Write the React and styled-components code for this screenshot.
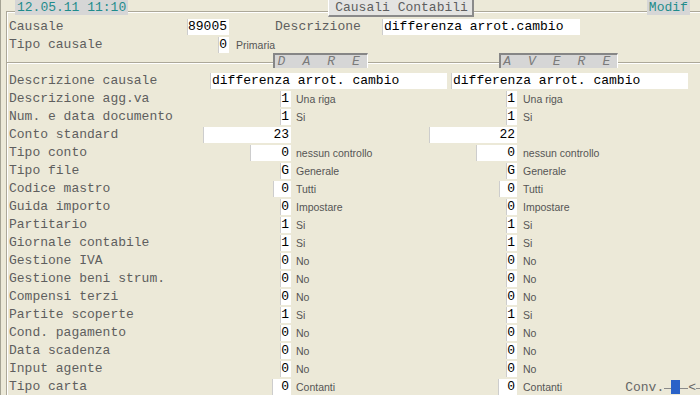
import React from 'react';
import styled, { createGlobalStyle } from 'styled-components';

const GlobalStyle = createGlobalStyle`
  html, body {
    margin: 0;
    padding: 0;
    background: #ece9d8;
  }
`;

const mono = `'Liberation Mono', 'Courier New', monospace`;
const sans = `'Liberation Sans', Arial, sans-serif`;

const Page = styled.div`
  width: 700px;
  height: 395px;
  overflow: hidden;
  box-sizing: border-box;
  background: #ece9d8;
  border-left: 1px solid #a5a394;
  padding-left: 5px;
  font-family: ${mono};
  font-size: 13px;
  color: #5e5e5e;
`;

const Frame = styled.div`
  margin-top: 11px;
  height: 384px;
  border-top: 1px solid #aca899;
  border-left: 1px solid #aca899;
  box-shadow: inset 1px 1px 0 #fff;
`;

const TopBar = styled.div`
  display: flex;
  align-items: flex-start;
  height: 18px;
  margin-top: -12px;
`;

const Clock = styled.div`
  margin-left: ${(p) => p.$ml}px;
  height: 15px;
  line-height: 15px;
  padding: 0 2px;
  background: #d6d6d6;
  color: #1f8c8c;
  white-space: pre;
`;

const TitleTab = styled.div`
  margin-left: 200px;
  height: 15px;
  line-height: 15px;
  padding: 0 4px 0 6px;
  background: #e4e4e2;
  border-right: 2px solid #8a8a8a;
  border-bottom: 2px solid #8a8a8a;
  border-left: 1px solid #fff;
  color: #5e5e5e;
`;

const HeadRow = styled.div`
  display: grid;
  grid-template-columns: 178px 42px 46px 107px 198px;
  align-items: center;
  height: 18px;
  padding-left: 2px;
`;

const Label = styled.div`
  white-space: pre;
  line-height: 18px;
  color: #5e5e5e;
`;

const Field = styled.div`
  box-sizing: border-box;
  width: ${(p) => p.$w}px;
  height: 16px;
  line-height: 16px;
  background: #fff;
  border-left: 1px solid #cdcdcd;
  color: #000;
  text-align: ${(p) => (p.$left ? 'left' : 'right')};
  padding: ${(p) => (p.$left ? '0 0 0 1px' : '0 2px 0 0')};
  white-space: pre;
  overflow: hidden;
`;

const Cell = styled.div`
  display: flex;
  justify-content: flex-end;
  align-items: center;
`;

const Desc = styled.div`
  display: flex;
  align-items: center;
  padding-left: ${(p) => p.$pl || 5}px;
  font-family: ${sans};
  font-size: 10.5px;
  color: #555;
  white-space: nowrap;
`;

const HeadsRow = styled.div`
  display: grid;
  grid-template-columns: 264px 95px 131px 119px;
  height: 18px;
  padding-left: 2px;
  background:
    linear-gradient(#aca899, #aca899) 0 8px / 100% 1px no-repeat,
    linear-gradient(#fff, #fff) 0 9px / 100% 1px no-repeat;
`;

const ColHead = styled.div`
  grid-column: ${(p) => p.$col};
  margin-top: -1px;
  height: 13px;
  line-height: 14px;
  background: #d6d6d6;
  border-top: 2px solid #868686;
  border-left: 2px solid #868686;
  border-right: 1px solid #fff;
  text-align: center;
  font-style: italic;
  letter-spacing: 4.6px;
  color: #7a7a7a;
  white-space: pre;
`;

const Row = styled.div`
  display: grid;
  grid-template-columns: 194px 88px 138px 88px 1fr;
  align-items: center;
  height: 18px;
  padding-left: 2px;
`;

const WideRow = styled.div`
  display: grid;
  grid-template-columns: 201px 241px 237px;
  align-items: center;
  height: 18px;
  padding-left: 2px;
`;

const Conv = styled.div`
  display: flex;
  align-items: center;
  margin-left: auto;
  font-family: ${mono};
  font-size: 13px;
  color: #666;
`;

const Dash = styled.span`
  display: block;
  width: ${(p) => p.$w}px;
  height: 1px;
  margin-top: 2px;
  background: #8a8a8a;
`;

const Cursor = styled.span`
  display: block;
  width: 9px;
  height: 14px;
  background: #2a62c8;
`;

const rows = [
  ['Descrizione agg.va', [11, '1', 'Una riga'], [11, '1', 'Una riga']],
  ['Num. e data documento', [11, '1', 'Si'], [11, '1', 'Si']],
  ['Conto standard', [88, '23', ''], [88, '22', '']],
  ['Tipo conto', [41, '0', 'nessun controllo'], [41, '0', 'nessun controllo']],
  ['Tipo file', [11, 'G', 'Generale'], [11, 'G', 'Generale']],
  ['Codice mastro', [18, '0', 'Tutti'], [18, '0', 'Tutti']],
  ['Guida importo', [11, '0', 'Impostare'], [11, '0', 'Impostare']],
  ['Partitario', [11, '1', 'Si'], [11, '1', 'Si']],
  ['Giornale contabile', [11, '1', 'Si'], [11, '1', 'Si']],
  ['Gestione IVA', [11, '0', 'No'], [11, '0', 'No']],
  ['Gestione beni strum.', [11, '0', 'No'], [11, '0', 'No']],
  ['Compensi terzi', [11, '0', 'No'], [11, '0', 'No']],
  ['Partite scoperte', [11, '1', 'Si'], [11, '1', 'Si']],
  ['Cond. pagamento', [11, '0', 'No'], [11, '0', 'No']],
  ['Data scadenza', [11, '0', 'No'], [11, '0', 'No']],
  ['Input agente', [11, '0', 'No'], [11, '0', 'No']],
  ['Tipo carta', [19, '0', 'Contanti'], [19, '0', 'Contanti']],
];

export default function App() {
  return (
    <Page>
      <GlobalStyle />
      <Frame>
        <TopBar>
          <Clock $ml={8}>12.05.11 11:10</Clock>
          <TitleTab>Causali Contabili</TitleTab>
          <Clock $ml={173}>Modif</Clock>
        </TopBar>

        <HeadRow>
          <Label>Causale</Label>
          <Field $w={42}>89005</Field>
          <span />
          <Label>Descrizione</Label>
          <Field $w={198} $left>differenza arrot.cambio</Field>
        </HeadRow>
        <HeadRow>
          <Label>Tipo causale</Label>
          <Cell>
            <Field $w={11}>0</Field>
          </Cell>
          <Desc $pl={7}>Primaria</Desc>
        </HeadRow>

        <HeadsRow>
          <ColHead $col={2}>D A R E</ColHead>
          <ColHead $col={4}>A V E R E</ColHead>
        </HeadsRow>

        <WideRow>
          <Label>Descrizione causale</Label>
          <Field $w={237} $left>differenza arrot. cambio</Field>
          <Field $w={237} $left>differenza arrot. cambio</Field>
        </WideRow>

        {rows.map(([label, dare, avere], i) => (
          <Row key={label}>
            <Label>{label}</Label>
            <Cell>
              <Field $w={dare[0]}>{dare[1]}</Field>
            </Cell>
            <Desc>{dare[2]}</Desc>
            <Cell>
              <Field $w={avere[0]}>{avere[1]}</Field>
            </Cell>
            <Desc $pl={6}>
              {avere[2]}
              {i === rows.length - 1 && (
                <Conv>
                  Conv.
                  <Dash $w={7} />
                  <Cursor />
                  <Dash $w={8} />
                  &lt;
                  <Dash $w={4} />
                </Conv>
              )}
            </Desc>
          </Row>
        ))}
      </Frame>
    </Page>
  );
}
